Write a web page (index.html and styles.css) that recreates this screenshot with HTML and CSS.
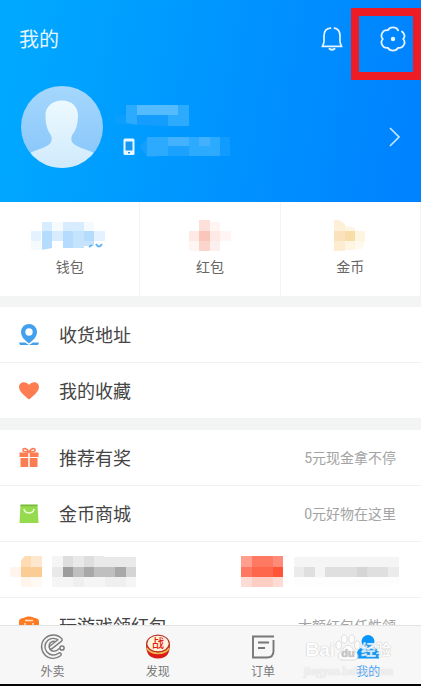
FILE: index.html
```html
<!DOCTYPE html>
<html lang="zh-CN">
<head>
<meta charset="utf-8">
<meta name="viewport" content="width=device-width, initial-scale=1">
<title>我的</title>
<link rel="stylesheet" href="styles.css">
</head>
<body>
<div class="screen">
  <main class="content">
    <header class="hero">
      <div class="topbar">
        <h1 class="title">我的</h1>
        <button class="icon-btn" type="button" aria-label="消息">
          <svg width="24" height="26" viewBox="0 0 24 26" fill="none" stroke="#e4f4ff" stroke-width="1.7" stroke-linecap="round"><path d="M10.500 2.200C6.500 2.500 4 5 4 10v5.500c0 2-1 3.300-1.500 4.800h19c-.5-1.500-1.500-2.800-1.500-4.800V10c0-4-2-7-5.500-7.800"/><path d="M9.500 22.800q2.500 2 5 0" stroke-width="2"/></svg>
        </button>
        <button class="icon-btn framed" type="button" aria-label="设置">
          <svg width="26" height="26" viewBox="0 0 26 26" fill="none" stroke="#e4f4ff" stroke-width="1.8" stroke-linecap="round" stroke-linejoin="round"><path d="M18.100 4.200C16 .5 10 .5 7.900 4.200C3 3.200-.5 9.300 2.800 13C-.5 16.700 3 22.800 7.900 21.800C10 25.500 16 25.500 18.100 21.800C23 22.800 26.500 16.700 23.200 13C25.500 10.500 24.500 7.500 22 5.500"/><circle cx="13" cy="13" r="1.300" fill="#fff"/></svg>
        </button>
      </div>
      <a class="profile" href="#profile" aria-label="个人资料">
        <svg class="avatar" width="82" height="82" viewBox="0 0 82 82">
          <defs><clipPath id="disc"><circle cx="41" cy="41" r="41"/></clipPath>
          <linearGradient id="sky" x2="0" y2="1"><stop stop-color="#a5d7fc"/><stop offset="1" stop-color="#85c5fb"/></linearGradient>
          <linearGradient id="bust" x2="0" y2="1"><stop stop-color="#edf9ff"/><stop offset="1" stop-color="#cfeafc"/></linearGradient></defs>
          <g clip-path="url(#disc)"><path fill="url(#sky)" d="M0 0h82v82H0z"/><path fill="url(#bust)" d="M41 14.500c-10 0-17 6.500-16.500 16 .2 10 2.500 14 5 18 1.500 2.500 1.500 5 .5 7.500-2 5-13 7-21 11v15h64V67c-8-4-19-6-22-11-1-2.500-1-5 .5-7.500 3-4 5-8 5.500-18 .5-9.500-6-16-16-16z"/></g>
        </svg>
        <span class="identity">
          <svg width="82" height="22" viewBox="0 0 82 22"><path fill="#0a9fff" d="M0 10h12v10L0 18z"/><path fill="#2caafd" d="M11 0h11v20l-11-2zM53 0h21v21H53z"/><path fill="#53bbfe" d="M22 0h41v10H22z"/><path fill="#159dfd" d="M22 10h31v11l-31-1z"/></svg>
          <span class="phone">
            <svg width="12" height="18" viewBox="0 0 12 18"><rect x=".5" y=".5" width="11" height="16.500" rx="1.500" fill="#e9f8ff"/><path fill="#1697f2" d="M2.500 3.500h7v9h-7zM5 14h2v1.500H5z"/></svg>
            <svg width="92" height="22" viewBox="0 0 92 22"><path fill="#149ffe" d="M0 10l9-9h8v20H7z"/><path fill="#2caafd" d="M7 1h73v19H7z"/><path fill="#44b1fe" d="M28 1h21v9H28zM59 1h11v9H59z"/><path fill="#169ffe" d="M28 10h21v10H28zM80 1h10v19H80z" opacity=".75"/></svg>
          </span>
        </span>
        <svg class="chevron" width="12" height="20" viewBox="0 0 12 20" fill="none" stroke="#c5e6ff" stroke-width="1.700"><path d="M1 1l9 9-9 9"/></svg>
      </a>
    </header>

    <section class="stats" aria-label="资产">
      <a class="stat" href="#wallet">
        <svg width="84" height="34" viewBox="0 0 84 34"><path fill="#e3f2fe" d="M3 11h10v10H3zM66 11h11v10H66z"/><path fill="#f5faff" d="M3 21h10v9H3zM24 2h11v9H24zM56 2h10v9H56z"/><path fill="#d7ecfe" d="M14 2h10v9H14zM24 11h11v10H24zM35 2h21v9H35zM35 21h21v7H35z"/><path fill="#b5dcfc" d="M14 11h10v17l-10 2zM35 11h10v17H35zM56 11h10v10H56z"/><path fill="#c5e3fc" d="M45 11h11v17H45zM56 21h10v5H56z"/><path d="M61 27l3-2M68 24q3 5 6 0" fill="none" stroke="#61b4f7" stroke-width="2"/></svg>
        <span>钱包</span>
      </a>
      <a class="stat" href="#coupons">
        <svg width="42" height="34" viewBox="0 0 42 34"><path fill="#fee9e5" d="M0 11h10v10H0zM21 11h10v10H21z"/><path fill="#fff6f4" d="M0 21h10v10H0zM21 2h10v9H21zM31 11h11v10H31z"/><path fill="#fde0da" d="M10 0h11v11H10z"/><path fill="#fac5ba" d="M10 11h11v10H10z"/><path fill="#fbd4cc" d="M10 21h11v10H10z"/><path fill="#fcf0ee" d="M21 21h10v10H21z"/></svg>
        <span>红包</span>
      </a>
      <a class="stat" href="#coins">
        <svg width="32" height="34" viewBox="0 0 32 34"><path fill="#fdf0d7" d="M0 0h5l6 4v7H0z"/><path fill="#fae3bc" d="M0 11h11v10H0z"/><path fill="#f9dda9" d="M11 11h10v10H11z"/><path fill="#fdecd0" d="M0 21h11v10H0z"/><path fill="#fdf4e2" d="M11 6l10 2v3H11zM11 21h10v9H11zM21 11h10v10H21z"/><path fill="#fff8ed" d="M21 21h10l-3 8h-7z"/></svg>
        <span>金币</span>
      </a>
    </section>

    <nav class="group" aria-label="个人">
      <a class="row" href="#address">
        <svg width="22" height="24" viewBox="0 0 22 24"><path fill="#42a0ee" fill-rule="evenodd" d="M11 1a8 8 0 0 0-8 8c0 4.700 4 8.500 8 11.500 4-3 8-6.800 8-11.500a8 8 0 0 0-8-8zm0 4.300a3.700 3.700 0 1 1 0 7.400 3.700 3.700 0 0 1 0-7.400z"/><path fill="#42a0ee" d="M1 19.500h6l4 2.500 4-2.500h6L20 22H2z"/></svg>
        <span class="label">收货地址</span>
      </a>
      <a class="row" href="#favourites">
        <svg width="22" height="24" viewBox="0 0 22 24"><path fill="#fd7c52" d="M11 20.500C7 17 1 12.500 1 8.200 1 2.600 8 1.800 11 6c3-4.200 10-3.400 10 2.200 0 4.300-6 8.800-10 12.300z"/></svg>
        <span class="label">我的收藏</span>
      </a>
    </nav>

    <nav class="group" aria-label="活动">
      <a class="row" href="#recommend">
        <svg width="22" height="24" viewBox="0 0 22 24"><path fill="#fc7c54" d="M1.500 6.500h8.700V11H1.500zM11.700 6.500h8.800V11h-8.800zM2.500 12h7.700v9H2.500zM11.700 12h7.800v9h-7.800z"/><path d="M11 6C9 2 4.500 1.500 5 4.500 5.300 6 8 6 11 6c3 0 5.700 0 6-1.500C17.500 1.500 13 2 11 6z" fill="none" stroke="#fc7c54" stroke-width="1.600"/></svg>
        <span class="label">推荐有奖</span><span class="note">5元现金拿不停</span>
      </a>
      <a class="row" href="#mall">
        <svg width="22" height="24" viewBox="0 0 22 24"><path fill="#95db4d" d="M2.500 2.500h17l1 18.500h-19z"/><path d="M2.500 3.500h17" stroke="#7eb747" stroke-width="1.500"/><path d="M6 7.500c1.500 4.700 8.500 4.700 10 0" fill="none" stroke="#eefbdc" stroke-width="1.500" stroke-linecap="round"/></svg>
        <span class="label">金币商城</span><span class="note">0元好物在这里</span>
      </a>
      <a class="row masked" href="#offer" aria-label="优惠">
        <svg width="128" height="32" viewBox="0 0 128 32"><path fill="#fff5ec" d="M0 11h11v10H0zM11 21h10v10H11z"/><path fill="#fedbb2" d="M11 4l4-4h6v11H11z"/><path fill="#fde7cf" d="M21 0h11v11H21z"/><path fill="#fbcc93" d="M11 11h21v10H11z"/><path fill="#fff9f3" d="M21 21h11v10H21z"/>
        <path fill="#f5f5f5" d="M42 0h11v11H42zM42 21h84v10H42z"/><path fill="#dedede" d="M53 0h10v11H53zM74 0h10v11H74z"/><path fill="#e9e9e9" d="M63 0h11v11H63zM84 0h10v11H84zM94 1h32v10H94zM42 11h11v10H42z"/><path fill="#efefef" d="M63 21h11v10H63zM95 21h21v10H95z"/><path fill="#9d9d9d" d="M53 11h10v10H53z"/><path fill="#bfbfbf" d="M63 11h53v10H63z"/><path fill="#a8a8a8" d="M74 11h10v10H74zM105 11h11v10h-11z"/><path fill="#d4d4d4" d="M116 11h10v10h-10z"/></svg>
        <svg width="159" height="32" viewBox="0 0 159 32"><path fill="#ff9e8d" d="M0 0h11v11H0z"/><path fill="#ff7861" d="M11 0h21v11H11zM0 11h11v10H0z"/><path fill="#ff8b78" d="M32 0h10v11H32z"/><path fill="#ff674d" d="M11 11h21v10H11z"/><path fill="#ff5438" d="M32 11h10v10H32z"/><path fill="#fedcd6" d="M0 21h11v10H0zM32 21h10v10H32z"/><path fill="#fecdc4" d="M11 21h21v10H11z"/>
        <path fill="#f5f5f5" d="M53 1h105v10H53zM74 11h10v10H74z"/><path fill="#fdfdfd" d="M53 21h105v8H53z"/><path fill="#ebebeb" d="M53 11h10v10H53zM147 11h11v10h-11z"/><path fill="#dfdfdf" d="M63 11h11v10H63zM84 11h63v10H84z"/><path fill="#d5d5d5" d="M116 11h10v10h-10z"/></svg>
      </a>
      <a class="row" href="#games">
        <svg width="22" height="24" viewBox="0 0 22 24"><path fill="#ff7a22" d="M1 21V8c0-3 2-4 5-4 2-2 8-2 10 0 3 0 5 1 5 4v13z"/><path d="M7 6.500h8M7 9v3M15 9v3" stroke="#ffe2c8" stroke-width="1.500"/></svg>
        <span class="label">玩游戏领红包</span><span class="note">大额红包任性领</span>
      </a>
    </nav>
  </main>

  <nav class="tabs" aria-label="主导航">
    <a class="tab" href="#food">
      <svg width="26" height="26" viewBox="0 0 26 26" fill="none" stroke-linecap="round"><path d="M20.500 5.800A10 10 0 1 0 19.500 20.500M20.500 5.800l-9.500 7.500" stroke="#7c7c7c" stroke-width="4.800"/><path d="M9.500 13.700c1.500 4.800 6.500 4 9.500 1M9.500 13.700c-1.500-6 4.500-8 7.500-4.700" stroke="#7c7c7c" stroke-width="1.500"/><path d="M20.500 5.800A10 10 0 1 0 19.500 20.500M20.500 5.800l-9.500 7.500" stroke="#f4f4f4" stroke-width="2"/><circle cx="22" cy="14" r="2.100" fill="#f7f7f7" stroke="#7c7c7c" stroke-width="1.500"/></svg>
      <span>外卖</span>
    </a>
    <a class="tab" href="#discover">
      <svg width="26" height="26" viewBox="0 0 26 26"><path fill="#d91c18" d="M1 9c0 9 2 15.500 12 15.500S25 18 25 9z"/><path d="M2 14c4 7 18 7 22 0" fill="none" stroke="#ecb552" stroke-width="2"/><ellipse cx="13" cy="9.500" rx="11.300" ry="8.300" fill="#fff5dc" stroke="#b93525" stroke-width="1.200"/><text class="drum" x="13" y="14" text-anchor="middle">战</text></svg>
      <span>发现</span>
    </a>
    <a class="tab" href="#orders">
      <svg width="26" height="26" viewBox="0 0 26 26" fill="none" stroke="#777" stroke-width="1.900"><path d="M24 2.500H3v21h14c4 0 6.500-2.500 6.500-6.500V6M8 8.500h11M8 14h7"/></svg>
      <span>订单</span>
    </a>
    <a class="tab active" href="#me" aria-current="page">
      <svg width="26" height="26" viewBox="0 0 26 26" fill="#0796fb"><circle cx="13" cy="7.500" r="6.500"/><path d="M2 24.500V20c0-4 3-6.500 6-6.500 3 1.500 7 1.500 10 0 3 0 6 2.500 6 6.500v4.500z"/></svg>
      <span>我的</span>
    </a>
    <div class="watermark">
      <div class="brand"><span>Bai</span><svg width="26" height="30" viewBox="0 0 28 30"><g fill="#fff" stroke="#d4d4d4"><ellipse cx="4" cy="12" rx="3" ry="4.500"/><ellipse cx="10" cy="5.500" rx="3" ry="4.500"/><ellipse cx="18" cy="5.500" rx="3" ry="4.500"/><ellipse cx="24" cy="12" rx="3" ry="4.500"/><path d="M14 12c-4 0-5 5-9 8-4 5 0 8 4 8h11c4 0 7-4 3-8-4-3-5-8-9-8z"/></g><text class="paw" x="14" y="25" text-anchor="middle">du</text></svg><span class="han">经验</span></div>
      <div class="site">jingyan.baidu.com</div>
    </div>
  </nav>
</div>
</body>
</html>
```
FILE: styles.css
```css
* { box-sizing: border-box; }

body {
  margin: 0;
  font-family: Roboto, "Noto Sans CJK SC", sans-serif;
  color: #444;
  background: #f3f4f4;
}

a { color: inherit; text-decoration: none; }
svg { display: block; flex: none; }

.screen {
  display: flex;
  flex-direction: column;
  height: 100vh;
  border-bottom: 2px solid #050505;
}

.content { flex: 1; min-height: 0; overflow: hidden; }

.hero {
  height: 202px;
  padding: 18px 15px 0 19px;
  background: linear-gradient(100deg, #00a8ff 5%, #0083ff 95%);
}

.topbar { display: flex; align-items: center; gap: 36px; height: 42px; }

.title {
  flex: 1;
  margin: 0;
  padding-top: 2px;
  font-size: 20px;
  font-weight: 400;
  line-height: 28px;
  color: #e4f5ff;
}

.icon-btn {
  position: relative;
  padding: 0;
  border: 0;
  background: none;
}

.framed::after {
  content: "";
  position: absolute;
  inset: -18px -15px -28px -29px;
  border: 8px solid #ee1c25;
}

.profile { display: flex; align-items: center; padding: 26px 5px 0 2px; }
.identity { flex: 1; padding: 8px 0 0 12px; }
.phone { display: flex; gap: 5px; align-items: center; padding: 9px 0 0 8px; }
.chevron { margin-top: 20px; }

.stats {
  display: grid;
  grid-template-columns: repeat(3, 1fr);
  height: 94px;
  background: #fff;
}

.stat {
  display: flex;
  flex-direction: column;
  align-items: center;
  padding-top: 18px;
  border-right: 1px solid #f3f4f4;
  font-size: 14px;
  line-height: 26px;
  color: #666;
}

.group { margin-top: 11px; background: #fff; }

.row {
  display: flex;
  align-items: center;
  gap: 19px;
  height: 56px;
  padding: 0 25px 0 18px;
  border-bottom: 1px solid #f1f3f3;
}

.masked { justify-content: space-between; padding: 4px 21px 0 10px; }

.label { flex: 1; padding-top: 2px; font-size: 18px; line-height: 28px; }
.note { font-size: 14px; line-height: 20px; color: #a3a3a3; }

.tabs {
  position: relative;
  display: grid;
  grid-template-columns: repeat(4, 1fr);
  height: 59px;
  border-top: 1px solid #e2e3e3;
  background: #f7f7f7;
}

.tab {
  display: flex;
  flex-direction: column;
  align-items: center;
  gap: 4px;
  padding-top: 8px;
  font-size: 12px;
  line-height: 16px;
  color: #777;
}

.active { color: #3b9ffa; }

.drum { font: 500 12px "Noto Sans CJK SC", sans-serif; fill: #e51d14; }

.watermark {
  position: absolute;
  right: 28px;
  top: 5px;
  color: #fff;
  text-shadow: 0 0 1px #bbb, 0 0 1px #bbb;
  opacity: 0.8;
  pointer-events: none;
}

.brand {
  display: flex;
  align-items: center;
  justify-content: center;
  font: 700 19px/30px "Liberation Sans", "Noto Sans CJK SC", sans-serif;
}

.brand span { padding-top: 4px; }
.brand .han { font-size: 15px; }
.paw { font: 700 12px "Liberation Sans", sans-serif; fill: #bbb; }

.site {
  font: 12px/12px "Liberation Serif", serif;
  text-align: center;
  color: #f4f4f4;
  opacity: 0.6;
}
```
